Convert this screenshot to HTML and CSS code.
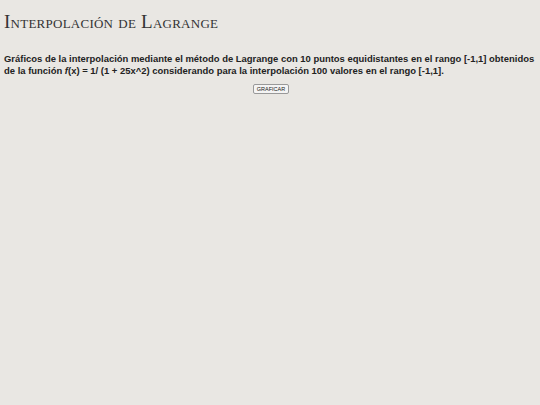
FILE: index.html
```html
<!DOCTYPE html>
<html lang="es">
<head>
    <meta charset="UTF-8">
    <title>Interpolación de Lagrange</title>
    <link rel="stylesheet" href="styles.css">
</head>
<body>
    <h1 class="titulo">Interpolación de Lagrange</h1>
    <!-- Descripción de la gráfica -->
    <p class="descripcion">Gráficos de la interpolación mediante el método de Lagrange con 10 puntos equidistantes en el rango [-1,1] obtenidos de la función <i>f</i>(x) = 1/ (1 + 25x^2) considerando para la interpolación 100 valores en el rango [-1,1].</p>
    <div class="acciones">
        <button class="boton">GRAFICAR</button>
    </div>
</body>
</html>
```

FILE: styles.css
```css
/* Página general */
body {
    margin: 0;
    padding: 0 2px 0 4px;
    background: #e9e7e3;
    color: #222;
    font-family: "Liberation Sans", Arial, sans-serif;
}
/* Título en versalitas */
.titulo {
    font-family: "Liberation Serif", "Times New Roman", serif;
    font-variant: small-caps;
    font-weight: normal;
    font-size: 19px;
    letter-spacing: 0.25px;
    color: #333;
    margin: 11px 0 0 0;
}
.descripcion {
    font-size: 9.45px;
    font-weight: bold;
    line-height: 12px;
    margin: 20px 0 0 0;
}
.acciones {
    text-align: center;
    margin-top: 0;
}
/* Botón de graficar */
.boton {
    font-family: "Liberation Sans", Arial, sans-serif;
    font-size: 5.5px;
    padding: 1px 3px;
    background: #f4f4f4;
    border: 1px solid #999;
    border-radius: 2px;
    color: #222;
}
```
